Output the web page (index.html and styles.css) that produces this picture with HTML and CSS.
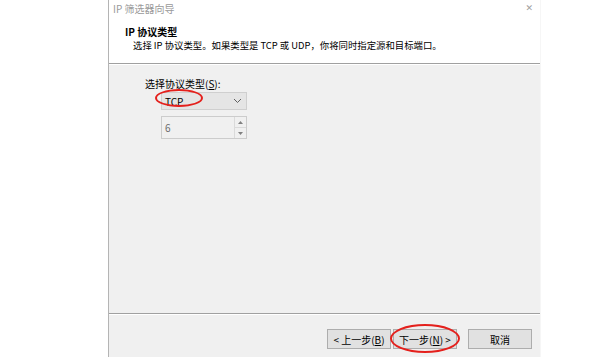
FILE: index.html
```html
<!DOCTYPE html>
<html>
<head>
    <meta charset="utf-8" />
    <title>IP 筛选器向导</title>
    <link rel="stylesheet" href="styles.css">
</head>
<body>
    <div class="dialog">
        <div class="header">
            <div class="titlebar">
                <span class="title">IP 筛选器向导</span>
                <span class="close">&#x2715;</span>
            </div>
            <div class="heading">IP 协议类型</div>
            <div class="subtitle">选择 IP 协议类型。如果类型是 TCP 或 UDP，你将同时指定源和目标端口。</div>
        </div>

        <div class="content">
            <div class="label">选择协议类型(<u>S</u>):</div>
            <div class="select">
                <span>TCP</span>
                <svg width="9" height="6" viewBox="0 0 9 6"><path d="M1 1 L4.5 4.5 L8 1" fill="none" stroke="#606060" stroke-width="1"/></svg>
                <span class="mark mark-tcp"></span>
            </div>
            <div class="spin">
                <span class="spin-value">6</span>
                <div class="spin-btns">
                    <div class="spin-btn"><svg width="5" height="3" viewBox="0 0 5 3"><path d="M0 3 L2.5 0 L5 3 Z" fill="#808080"/></svg></div>
                    <div class="spin-btn"><svg width="5" height="3" viewBox="0 0 5 3"><path d="M0 0 L2.5 3 L5 0 Z" fill="#808080"/></svg></div>
                </div>
            </div>
        </div>

        <div class="footer">
            <button class="btn">&lt; 上一步(<u>B</u>)</button>
            <button class="btn next">下一步(<u>N</u>) &gt;<span class="mark mark-next"></span></button>
            <button class="btn cancel">取消</button>
        </div>
    </div>
</body>
</html>
```

FILE: styles.css
```css
body {
    margin: 0;
    background: white;
    font-family: 'Noto Sans CJK SC', 'Noto Sans', sans-serif;
    font-size: 10px;
    color: #000;
}

.dialog {
    margin-left: 108px;
    width: 431px;
    height: 357px;
    border-left: 1px solid #b4b4b4;
    border-right: 1px solid #f6f6f6;
    display: flex;
    flex-direction: column;
}

.header {
    height: 64px;
    background: white;
    border-bottom: 1px solid #a0a0a0;
    box-sizing: border-box;
}

.titlebar {
    display: flex;
    justify-content: space-between;
    align-items: center;
    height: 16px;
    padding: 0 7px 0 4px;
}
.title {
    color: #9a9a9a;
    font-size: 10px;
}
.close {
    color: #a0a0a0;
    font-size: 9px;
    font-family: 'DejaVu Sans', sans-serif;
}

.heading {
    margin: 9px 0 0 16px;
    font-weight: bold;
    line-height: 14px;
}
.subtitle {
    margin: 0 0 0 24px;
    font-size: 9.4px;
    line-height: 13px;
}

.content {
    flex: 1;
    background: #f0f0f0;
    border-top: 1px solid #ffffff;
    border-bottom: 1px solid #a0a0a0;
    padding: 12px 0 0 36px;
}

.label {
    line-height: 14px;
}

.select {
    position: relative;
    margin: 1px 0 0 16px;
    width: 86px;
    height: 18px;
    box-sizing: border-box;
    background: #e5e5e5;
    border: 1px solid #cfcfcf;
    display: flex;
    align-items: center;
    justify-content: space-between;
    padding: 0 4px 0 3px;
}

.spin {
    margin: 6px 0 0 16px;
    width: 86px;
    height: 23px;
    box-sizing: border-box;
    background: #f0f0f0;
    border: 1px solid #cccccc;
    display: flex;
    justify-content: space-between;
}
.spin-value {
    color: #6d6d6d;
    padding: 3px 0 0 3px;
}
.spin-btns {
    width: 11px;
    display: flex;
    flex-direction: column;
    border-left: 1px solid #dadada;
}
.spin-btn {
    flex: 1;
    display: flex;
    align-items: center;
    justify-content: center;
}
.spin-btn + .spin-btn {
    border-top: 1px solid #dadada;
}

.footer {
    height: 43px;
    background: #f0f0f0;
    border-top: 1px solid #ffffff;
    box-sizing: border-box;
    display: flex;
    justify-content: flex-end;
    align-items: flex-start;
    gap: 2px;
    padding: 14px 8px 0 0;
}

.btn {
    position: relative;
    width: 64px;
    height: 20px;
    padding: 0;
    background: #e1e1e1;
    border: 1px solid #adadad;
    font-family: inherit;
    font-size: 10px;
    color: #000;
}
.btn.cancel {
    margin-left: 9px;
}

.mark {
    position: absolute;
    border: 2px solid #e4201c;
    border-radius: 50%;
    pointer-events: none;
}
.mark-tcp {
    left: -7px;
    top: -4px;
    width: 44px;
    height: 14px;
}
.mark-next {
    left: -4px;
    top: -6px;
    width: 66px;
    height: 25px;
}
```
